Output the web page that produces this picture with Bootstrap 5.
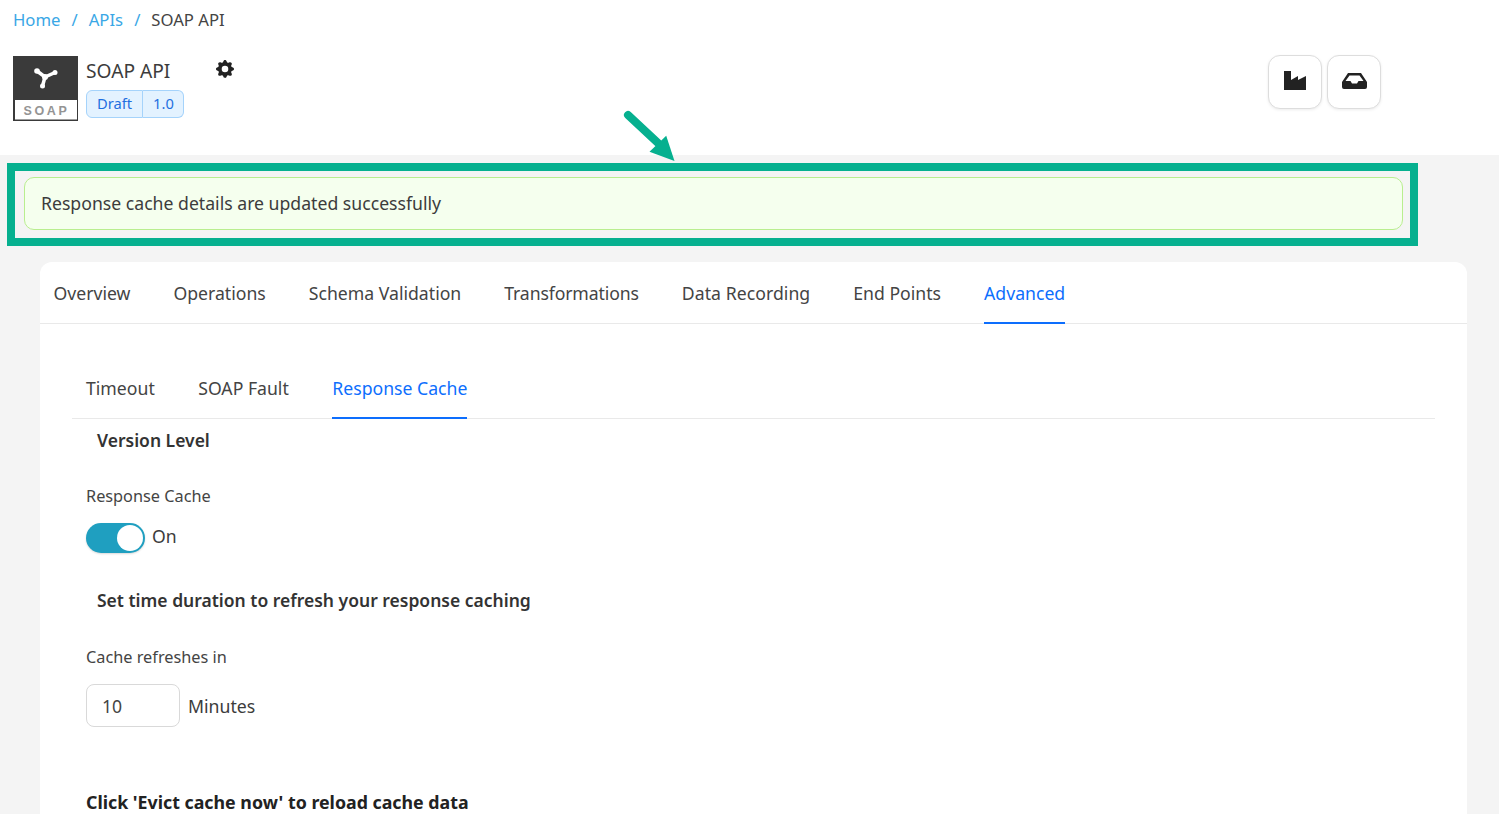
<!DOCTYPE html>
<html lang="en"><head><meta charset="utf-8"><title>SOAP API</title>
<link href="https://cdn.jsdelivr.net/npm/bootstrap@5.3.0/dist/css/bootstrap.min.css" rel="stylesheet">
<style>
html,body{height:814px;overflow:hidden}
body{background:#f4f4f4;font-family:"Noto Sans","Open Sans",sans-serif;color:#3c3c3c;font-size:17.6px;position:relative}
.page-head{background:#fff;height:155px;padding:0 13px;position:relative}
.crumbs{padding-top:7px;height:56px;margin:0;font-size:16.700px;line-height:25px;--bs-breadcrumb-item-padding-x:11px;--bs-breadcrumb-item-active-color:#444;--bs-breadcrumb-margin-bottom:0}
.crumbs a{color:#3aa7e6;text-decoration:none}
.crumbs .breadcrumb-item+.breadcrumb-item::before{color:#3aa7e6}
.logo-box{width:65px;height:65px;flex:none}
.api-name{font-size:19.2px;line-height:30px;color:#3c3c3c;width:130px}
.pill-row{margin-top:4px}
.ver-pill{background:#e3f2ff;border:1px solid #a5d3fb;color:#1f6fe0;font-size:14.7px;line-height:24px;height:28px;padding:0 10px}
.ver-pill:first-child{border-radius:6px 0 0 6px}
.ver-pill:last-child{border-radius:0 6px 6px 0;border-left-width:0;padding:0 9px 0 10px}
.sq-btn{width:54px;height:54px;padding:0 0 3px;background:#fff;border:1px solid #ddd;border-radius:12px;box-shadow:0 1px 3px rgba(0,0,0,.08)}
.sq-btn:hover{background:#fff;border-color:#ddd}
.btn-row{margin:-1px 105px 0 0;gap:5px}
.mark-frame{margin:8px 81px 0 7px;border:8px solid #06b08f;padding:6px 7px 8px 9px}
.note{margin:0;height:53px;padding:0 16px;line-height:51px;background:#f5ffee;border:1px solid #b9ee8f;border-radius:10px;color:#3c3c3c;font-size:17.65px}
.pointer{position:absolute;left:619.5px;top:108px}
.panel{margin:16px 32px 0 40px;background:#fff;border:0;border-radius:12px 12px 0 0;height:560px;overflow:hidden}
.tabs-a,.tabs-b{display:flex;list-style:none;margin:0;padding:0;border-bottom:1px solid #e9e9e9}
.tabs-a{gap:43px;padding-left:13.5px;height:62px}
.tabs-b{gap:43.5px;margin:33px 32px 0;padding-left:14px;height:62px}
.tabs-a a,.tabs-b a{display:block;height:62px;line-height:62px;color:#444;text-decoration:none;font-size:17.65px}
.tabs-a a.on,.tabs-b a.on{color:#0d6efd;border-bottom:2px solid #0d6efd}
.tabs-a a.tight-t{letter-spacing:-.13px}
.tabs-a a.loose-t{letter-spacing:.05px}
.body-wrap{padding:0 46px}
.sect{font-weight:600;font-size:17.5px;line-height:25px;color:#333;padding-left:11px;margin:0}
.sect-top{margin-top:9px}
.sect-mid{margin-top:35px}
.sect-end{margin-top:63px;padding-left:0;font-size:17.8px;font-weight:700;color:#222}
.lbl{font-size:16.3px;line-height:24px;color:#444;margin:31px 0 0}
.lbl-b{margin-top:32px}
.ctl-row{margin-top:15px}
.tog{width:59px;height:30px;background:#1f9fc0;border-radius:15px;position:relative;flex:none;box-shadow:0 1px 2px rgba(0,0,0,.15)}
.tog::after{content:"";position:absolute;right:2px;top:2px;width:26px;height:26px;background:#fff;border-radius:50%}
.on-word{margin:-3px 0 0 -1px}
.num-in{width:94px;height:43px;border:1px solid #d9d9d9;border-radius:8px;padding:0 15px;font-size:17.6px;color:#444;background:#fff}
.num-word{font-size:17.700px;margin-top:1px}
</style></head>
<body>
<div class="page-head">
  <nav aria-label="breadcrumb"><ol class="breadcrumb crumbs">
    <li class="breadcrumb-item"><a href="#">Home</a></li>
    <li class="breadcrumb-item"><a href="#">APIs</a></li>
    <li class="breadcrumb-item active">SOAP API</li>
  </ol></nav>
  <div class="d-flex align-items-start">
    <svg class="logo-box" viewBox="0 0 65 65"><rect width="65" height="65" fill="#3a3a3a"/><rect x="2" y="44" width="62" height="19.500" fill="#fff"/><g stroke="#fff" fill="#fff"><path d="M24 15 L32 21 L42 16.500 M32 21 L29.500 30" fill="none" stroke-width="3.500"/><circle cx="24" cy="15" r="2.800" stroke-width="0"/><circle cx="42" cy="16.500" r="2.500" stroke-width="0"/><circle cx="29.500" cy="30" r="2.500" stroke-width="0"/><circle cx="32" cy="21" r="3" stroke-width="0"/></g><text x="33.500" y="59" text-anchor="middle" font-family="Liberation Sans" font-weight="700" font-size="12.500" letter-spacing="2.600" fill="#949494">SOAP</text></svg>
    <div class="ms-2">
      <div class="api-name">SOAP API</div>
      <div class="d-flex pill-row"><span class="ver-pill">Draft</span><span class="ver-pill">1.0</span></div>
    </div>
    <svg class="mt-1" width="18" height="18" viewBox="0 0 16 16" fill="#222"><path d="M9.405 1.05c-.413-1.400-2.397-1.400-2.810 0l-.100.340a1.464 1.464 0 0 1-2.105.872l-.310-.170c-1.283-.698-2.686.705-1.987 1.987l.169.311c.446.820.023 1.841-.872 2.105l-.340.100c-1.400.413-1.400 2.397 0 2.810l.340.100a1.464 1.464 0 0 1 .872 2.105l-.170.310c-.698 1.283.705 2.686 1.987 1.987l.311-.169a1.464 1.464 0 0 1 2.105.872l.100.340c.413 1.400 2.397 1.400 2.810 0l.100-.340a1.464 1.464 0 0 1 2.105-.872l.310.170c1.283.698 2.686-.705 1.987-1.987l-.169-.311a1.464 1.464 0 0 1 .872-2.105l.340-.100c1.400-.413 1.400-2.397 0-2.810l-.340-.100a1.464 1.464 0 0 1-.872-2.105l.170-.310c.698-1.283-.705-2.686-1.987-1.987l-.311.169a1.464 1.464 0 0 1-2.105-.872zM8 10.930a2.929 2.929 0 1 1 0-5.860 2.929 2.929 0 0 1 0 5.858z"/></svg>
    <div class="ms-auto d-flex btn-row">
      <button class="btn sq-btn" aria-label="Factory"><svg class="d-block mx-auto" width="22" height="19" viewBox="0 0 22 19" fill="#222"><path d="M0 0H7V9L14 5V9L22 5V19H0Z"/></svg></button>
      <button class="btn sq-btn" aria-label="Inbox"><svg class="d-block mx-auto" width="25" height="16" viewBox="0 0 25 16" fill="#222"><path d="M6 0H19L25 9V14Q25 16 23 16H2Q0 16 0 14V9ZM7.500 2.500 3.500 8H8.500L10 10.500H15L16.500 8H21.500L17.500 2.500Z"/></svg></button>
    </div>
  </div>
</div>
<svg class="pointer" width="60" height="56" viewBox="0 0 60 56"><path d="M8 7 L38 35" stroke="#06b08f" stroke-width="8" stroke-linecap="round"/><path d="M29.500 43.700 L46.200 27.700 L54.500 53 Z" fill="#06b08f"/></svg>
<div class="mark-frame"><div class="note" role="alert">Response cache details are updated successfully</div></div>
<div class="panel">
  <ul class="tabs-a">
    <li><a href="#">Overview</a></li><li><a href="#">Operations</a></li><li><a href="#">Schema Validation</a></li><li><a href="#" class="tight-t">Transformations</a></li><li><a href="#" class="loose-t">Data Recording</a></li><li><a href="#">End Points</a></li><li><a href="#" class="on">Advanced</a></li>
  </ul>
  <ul class="tabs-b">
    <li><a href="#">Timeout</a></li><li><a href="#">SOAP Fault</a></li><li><a href="#" class="on">Response Cache</a></li>
  </ul>
  <div class="body-wrap">
    <p class="sect sect-top">Version Level</p>
    <p class="lbl">Response Cache</p>
    <div class="d-flex align-items-center gap-2 ctl-row"><span class="tog"></span><span class="on-word">On</span></div>
    <p class="sect sect-mid">Set time duration to refresh your response caching</p>
    <p class="lbl lbl-b">Cache refreshes in</p>
    <div class="d-flex align-items-center gap-2 ctl-row"><input class="num-in" value="10" aria-label="Minutes"><span class="num-word">Minutes</span></div>
    <p class="sect sect-end">Click 'Evict cache now' to reload cache data</p>
  </div>
</div>
<script src="https://cdn.jsdelivr.net/npm/bootstrap@5.3.0/dist/js/bootstrap.bundle.min.js"></script>
</body></html>
